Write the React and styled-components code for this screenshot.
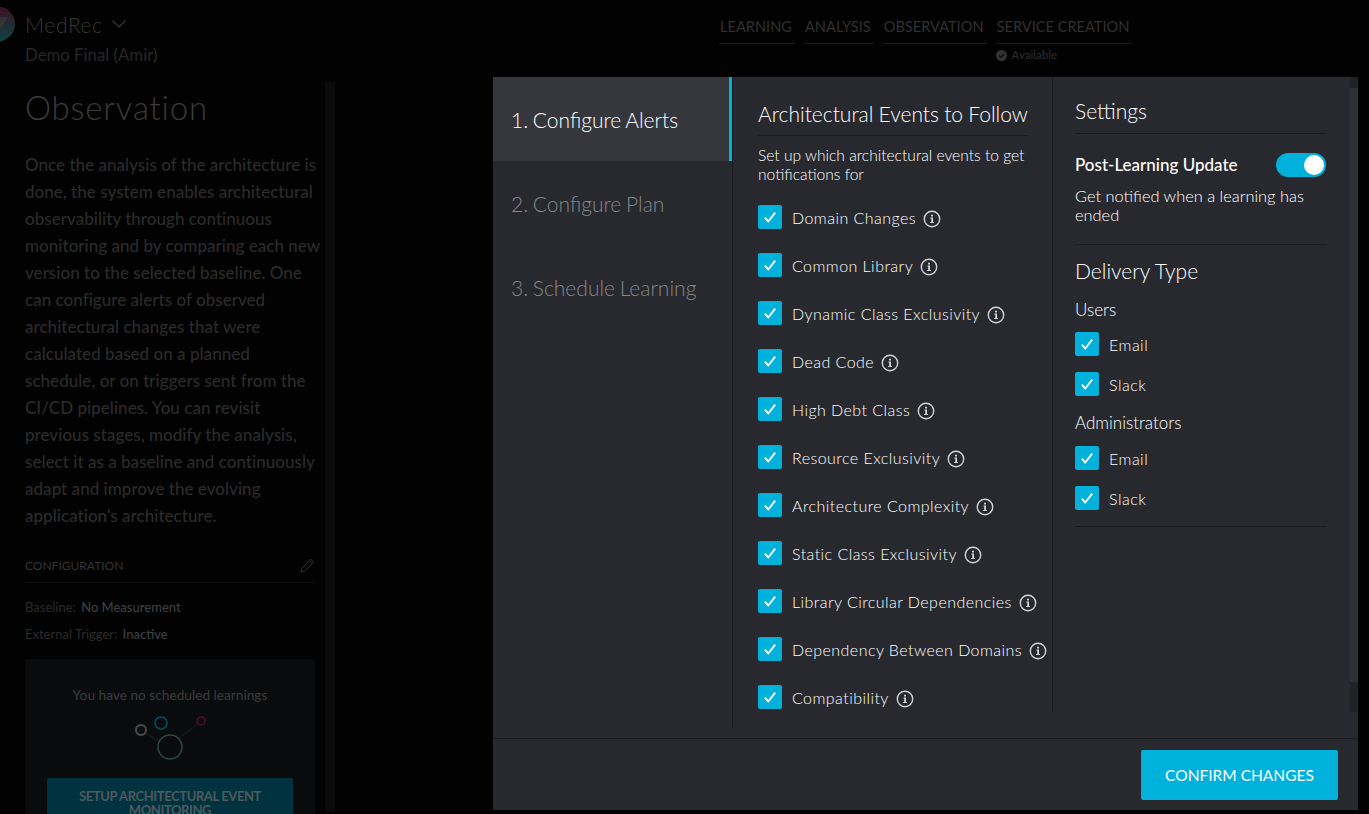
import React from 'react'
import styled, { createGlobalStyle } from 'styled-components'

const Colors = {
  blue: '#00b1dc',
  panel: '#28292e',
  line: '#1b1c20',
  white: '#ffffff',
}

const events = [
  'Domain Changes',
  'Common Library',
  'Dynamic Class Exclusivity',
  'Dead Code',
  'High Debt Class',
  'Resource Exclusivity',
  'Architecture Complexity',
  'Static Class Exclusivity',
  'Library Circular Dependencies',
  'Dependency Between Domains',
  'Compatibility',
]

const tabs = ['LEARNING', 'ANALYSIS', 'OBSERVATION', 'SERVICE CREATION']

const CheckBox = () => (
  <Box>
    <svg width="24" height="24" viewBox="0 0 24 24" fill="none">
      <path d="M7 12.6 L10.2 16.6 L17.2 7.6" stroke="#fff" strokeWidth="1.8" />
    </svg>
  </Box>
)

const InfoIcon = () => (
  <InfoSvg width="18" height="18" viewBox="0 0 18 18" fill="none">
    <circle cx="9" cy="9" r="7.7" stroke="#d2d3d5" strokeWidth="1.4" />
    <path d="M8 4.8h2v1.8H8z M7.5 7.6h2.5v4.3h.9v1.2H7.2v-1.2h1v-3.1h-.7z" fill="#d2d3d5" />
  </InfoSvg>
)

const App = () => {
  return (
    <Page>
      <GlobalStyle />
      <Sidebar>
        <Brand>
          <svg width="40" height="36" viewBox="0 0 40 36">
            <defs>
              <linearGradient id="logo" x1="0.6" y1="0" x2="0.6" y2="1">
                <stop offset="0" stopColor="#3a1226" />
                <stop offset="1" stopColor="#0c4442" />
              </linearGradient>
            </defs>
            <circle cx="19.5" cy="18" r="17.5" fill="url(#logo)" />
            <path d="M8 11 L30 11 L20 27 Z" fill="#343434" />
          </svg>
          <BrandName>MedRec</BrandName>
          <svg width="16" height="10" viewBox="0 0 16 10" fill="none">
            <path d="M1.5 1.5 L8 8 L14.5 1.5" stroke="#333" strokeWidth="1.3" />
          </svg>
        </Brand>
        <SubBrand>Demo Final (Amir)</SubBrand>
        <SideBody>
          <SideContent>
            <PageTitle>Observation</PageTitle>
            <Paragraph>
              Once the analysis of the architecture is done, the system enables architectural
              observability through continuous monitoring and by comparing each new version to the
              selected baseline. One can configure alerts of observed architectural changes that
              were calculated based on a planned schedule, or on triggers sent from the CI/CD
              pipelines. You can revisit previous stages, modify the analysis, select it as a
              baseline and continuously adapt and improve the evolving application's architecture.
            </Paragraph>
            <ConfigHead>
              CONFIGURATION
              <svg width="15" height="15" viewBox="0 0 15 15" fill="none">
                <path d="M1 14 L1.8 10.4 L10.8 1.2 L13.8 4.2 L4.6 13.2 Z M9.4 2.6 L12.4 5.6" stroke="#2f2f2f" />
              </svg>
            </ConfigHead>
            <ConfigRow>
              Baseline: <b>No Measurement</b>
            </ConfigRow>
            <ConfigRow>
              External Trigger: <b>Inactive</b>
            </ConfigRow>
            <ScheduleCard>
              <ScheduleText>You have no scheduled learnings</ScheduleText>
              <svg width="76" height="48" viewBox="0 0 76 48" fill="none">
                <path d="M14 19 L28 28 M46 25 L66 10" stroke="#161616" strokeWidth="1.5" />
                <circle cx="9" cy="16" r="5" stroke="#4a4a4a" strokeWidth="2" />
                <circle cx="29" cy="9" r="6" stroke="#06424f" strokeWidth="2" />
                <circle cx="69" cy="7" r="4" stroke="#420d24" strokeWidth="2" />
                <circle cx="38" cy="33" r="12" stroke="#2d4a3e" strokeWidth="1.5" />
              </svg>
              <SetupButton>SETUP ARCHITECTURAL EVENT MONITORING</SetupButton>
            </ScheduleCard>
          </SideContent>
          <SideScroll />
        </SideBody>
      </Sidebar>

      <TopNav>
        {tabs.map(t => (
          <Tab key={t}>
            <TabLabel>{t}</TabLabel>
            {t === 'SERVICE CREATION' && (
              <Status>
                <svg width="11" height="11" viewBox="0 0 11 11">
                  <circle cx="5.5" cy="5.5" r="5.5" fill="#333" />
                  <path d="M3 5.6 L4.9 7.4 L8 3.8" stroke="#0a0a0a" strokeWidth="1.2" fill="none" />
                </svg>
                Available
              </Status>
            )}
          </Tab>
        ))}
      </TopNav>

      <Modal>
        <ModalBody>
          <Steps>
            <Step $active>1. Configure Alerts</Step>
            <Step>2. Configure Plan</Step>
            <Step>3. Schedule Learning</Step>
          </Steps>
          <EventsColumn>
            <SectionTitle>Architectural Events to Follow</SectionTitle>
            <Hint>Set up which architectural events to get notifications for</Hint>
            <EventList>
              {events.map(e => (
                <EventRow key={e}>
                  <CheckBox />
                  <span>{e}</span>
                  <InfoIcon />
                </EventRow>
              ))}
            </EventList>
          </EventsColumn>
          <SettingsColumn>
            <SettingsContent>
              <SettingsTitle>Settings</SettingsTitle>
              <ToggleRow>
                <strong>Post-Learning Update</strong>
                <Toggle />
              </ToggleRow>
              <ToggleHint>Get notified when a learning has ended</ToggleHint>
              <DeliveryTitle>Delivery Type</DeliveryTitle>
              <GroupLabel>Users</GroupLabel>
              <DeliveryRow><CheckBox />Email</DeliveryRow>
              <DeliveryRow><CheckBox />Slack</DeliveryRow>
              <GroupLabel $admin>Administrators</GroupLabel>
              <DeliveryRow><CheckBox />Email</DeliveryRow>
              <DeliveryRow><CheckBox />Slack</DeliveryRow>
              <EndLine />
            </SettingsContent>
            <ModalScroll>
              <ScrollThumb />
            </ModalScroll>
          </SettingsColumn>
        </ModalBody>
        <ModalFooter>
          <ConfirmButton>CONFIRM CHANGES</ConfirmButton>
        </ModalFooter>
      </Modal>
    </Page>
  )
}

export default App

const GlobalStyle = createGlobalStyle`
html, body {
  margin: 0;
  background: #000;
}
* {
  box-sizing: border-box;
}
`

const Page = styled.div`
position: relative;
display: flex;
width: 1369px;
height: 814px;
overflow: hidden;
background: #020202;
font-family: Lato, "Liberation Sans", sans-serif;
`

const Sidebar = styled.aside`
width: 335px;
flex-shrink: 0;
padding-top: 6px;
`

const Brand = styled.div`
display: flex;
align-items: center;
height: 36px;
margin-left: -22px;
svg:last-child {
  margin-left: 8px;
}
`

const BrandName = styled.span`
margin-left: 7px;
font-size: 21px;
font-weight: 300;
color: #383838;
letter-spacing: 0.6px;
`

const SubBrand = styled.div`
margin: 3px 0 0 25px;
font-size: 16.8px;
color: #272727;
line-height: 20px;
`

const SideBody = styled.div`
display: flex;
padding-left: 25px;
margin-top: 21px;
`

const SideContent = styled.div`
width: 290px;
flex-shrink: 0;
`

const SideScroll = styled.div`
width: 10px;
height: 730px;
margin: -4px 0 0 10px;
background: #0a0a0a;
`

const PageTitle = styled.h1`
margin: 0;
font-size: 33px;
font-weight: 300;
line-height: 42px;
letter-spacing: 0.8px;
color: #3a3a3a;
`

const Paragraph = styled.p`
width: 297px;
margin: 23px 0 0;
font-size: 17px;
font-weight: 500;
line-height: 27px;
letter-spacing: 0.03px;
color: #2b2b2b;
`

const ConfigHead = styled.div`
display: flex;
justify-content: space-between;
align-items: center;
margin-top: 20px;
height: 34px;
border-bottom: 1px solid #101010;
font-size: 12px;
color: #343434;
`

const ConfigRow = styled.div`
margin-top: 7px;
height: 20px;
line-height: 20px;
font-size: 13px;
color: #2a2a2a;
&:nth-of-type(2) {
  margin-top: 14px;
}
b {
  margin-left: 2px;
  font-weight: 500;
  color: #3c3f42;
}
`

const ScheduleCard = styled.div`
display: flex;
flex-direction: column;
align-items: center;
margin-top: 15px;
height: 240px;
padding-top: 28px;
border-radius: 3px;
background: #0a0b0d;
svg {
  margin-top: 11px;
}
`

const ScheduleText = styled.div`
font-size: 13.7px;
line-height: 16px;
color: #3b3b3b;
`

const SetupButton = styled.div`
width: 246px;
margin-top: 16px;
padding: 11px 20px;
border-radius: 2px;
background: #00323f;
text-align: center;
font-size: 13px;
font-weight: 700;
line-height: 14px;
letter-spacing: -0.4px;
color: #4d5a5e;
`

const TopNav = styled.nav`
display: flex;
align-items: flex-start;
gap: 9px;
margin: 14px 0 0 384px;
`

const Tab = styled.div`
display: flex;
flex-direction: column;
`

const TabLabel = styled.div`
height: 30px;
padding: 3px 3px 0 1px;
border-bottom: 1px solid #06262e;
font-size: 14.6px;
line-height: 19px;
color: #303030;
white-space: nowrap;
`

const Status = styled.div`
display: flex;
align-items: center;
gap: 5px;
margin-top: 4px;
font-size: 11.6px;
line-height: 14px;
color: #2e2e2e;
`

const Modal = styled.div`
position: absolute;
left: 493px;
top: 77px;
display: flex;
flex-direction: column;
width: 865px;
height: 733px;
background: ${Colors.panel};
color: ${Colors.white};
`

const ModalBody = styled.div`
display: flex;
align-items: flex-start;
height: 661px;
`

const Steps = styled.div`
width: 239px;
flex-shrink: 0;
`

const Step = styled.div`
display: flex;
align-items: center;
height: 84px;
padding-left: 18px;
font-size: 21px;
font-weight: 300;
word-spacing: -1px;
color: ${p => (p.$active ? '#fff' : '#84868a')};
background: ${p => (p.$active ? '#36373c' : 'transparent')};
border-right: 3px solid ${p => (p.$active ? Colors.blue : 'transparent')};
`

const EventsColumn = styled.div`
width: 320px;
flex-shrink: 0;
height: 651px;
padding: 20px 0 0 25px;
border-left: 1px solid ${Colors.line};
`

const SectionTitle = styled.h2`
width: 270px;
height: 39px;
margin: 0;
border-bottom: 1px solid ${Colors.line};
font-size: 21px;
font-weight: 300;
line-height: 34px;
word-spacing: -0.5px;
white-space: nowrap;
`

const Hint = styled.div`
width: 280px;
margin-top: 10px;
font-size: 15.6px;
font-weight: 300;
line-height: 19px;
`

const EventList = styled.div`
display: flex;
flex-direction: column;
margin-top: 10px;
`

const EventRow = styled.div`
display: flex;
align-items: center;
height: 48px;
padding-bottom: 2px;
font-size: 16px;
font-weight: 300;
letter-spacing: 0.45px;
white-space: nowrap;
`

const Box = styled.span`
display: flex;
align-items: center;
justify-content: center;
flex-shrink: 0;
width: 24px;
height: 24px;
margin-right: 10px;
border-radius: 2px;
background: ${Colors.blue};
`

const InfoSvg = styled.svg`
flex-shrink: 0;
margin: 4px 0 0 7px;
`

const SettingsColumn = styled.div`
display: flex;
justify-content: space-between;
height: 635px;
flex: 1;
padding-left: 22px;
border-left: 1px solid ${Colors.line};
`

const SettingsContent = styled.div`
width: 251px;
padding-top: 17px;
`

const SettingsTitle = styled.h2`
height: 40px;
margin: 0;
border-bottom: 1px solid ${Colors.line};
font-size: 21px;
font-weight: 300;
line-height: 34px;
`

const ToggleRow = styled.div`
display: flex;
justify-content: space-between;
align-items: center;
margin-top: 19px;
height: 24px;
font-size: 17px;
strong {
  font-weight: 500;
  margin-bottom: 2px;
}
`

const Toggle = styled.span`
position: relative;
width: 50px;
height: 24px;
border-radius: 12px;
background: ${Colors.blue};
&::after {
  content: '';
  position: absolute;
  right: 2px;
  top: 2px;
  width: 20px;
  height: 20px;
  border-radius: 50%;
  background: #fff;
}
`

const ToggleHint = styled.div`
margin-top: 9px;
padding-bottom: 20px;
border-bottom: 1px solid ${Colors.line};
font-size: 16.4px;
font-weight: 300;
line-height: 19px;
`

const DeliveryTitle = styled.h2`
margin: 12px 0 0;
font-size: 21px;
font-weight: 300;
line-height: 28px;
`

const GroupLabel = styled.div`
margin-top: ${p => (p.$admin ? '8px' : '15px')};
margin-bottom: ${p => (p.$admin ? '6px' : '5px')};
font-size: 17px;
font-weight: 300;
line-height: 20px;
`

const DeliveryRow = styled.div`
display: flex;
align-items: center;
height: 40px;
padding-bottom: 2px;
font-size: 16px;
font-weight: 300;
letter-spacing: 0.5px;
`

const EndLine = styled.div`
margin-top: 7px;
border-top: 1px solid ${Colors.line};
`

const ModalScroll = styled.div`
width: 8px;
height: 100%;
padding-top: 11px;
background: #212226;
`

const ScrollThumb = styled.div`
height: 594px;
background: #2f3035;
`

const ModalFooter = styled.div`
display: flex;
justify-content: flex-end;
height: 72px;
padding: 11px 20px 0 0;
border-top: 1px solid ${Colors.line};
`

const ConfirmButton = styled.button`
width: 197px;
height: 50px;
border: none;
border-radius: 2px;
background: ${Colors.blue};
color: #fff;
font-family: inherit;
font-size: 15.5px;
font-weight: 400;
`
